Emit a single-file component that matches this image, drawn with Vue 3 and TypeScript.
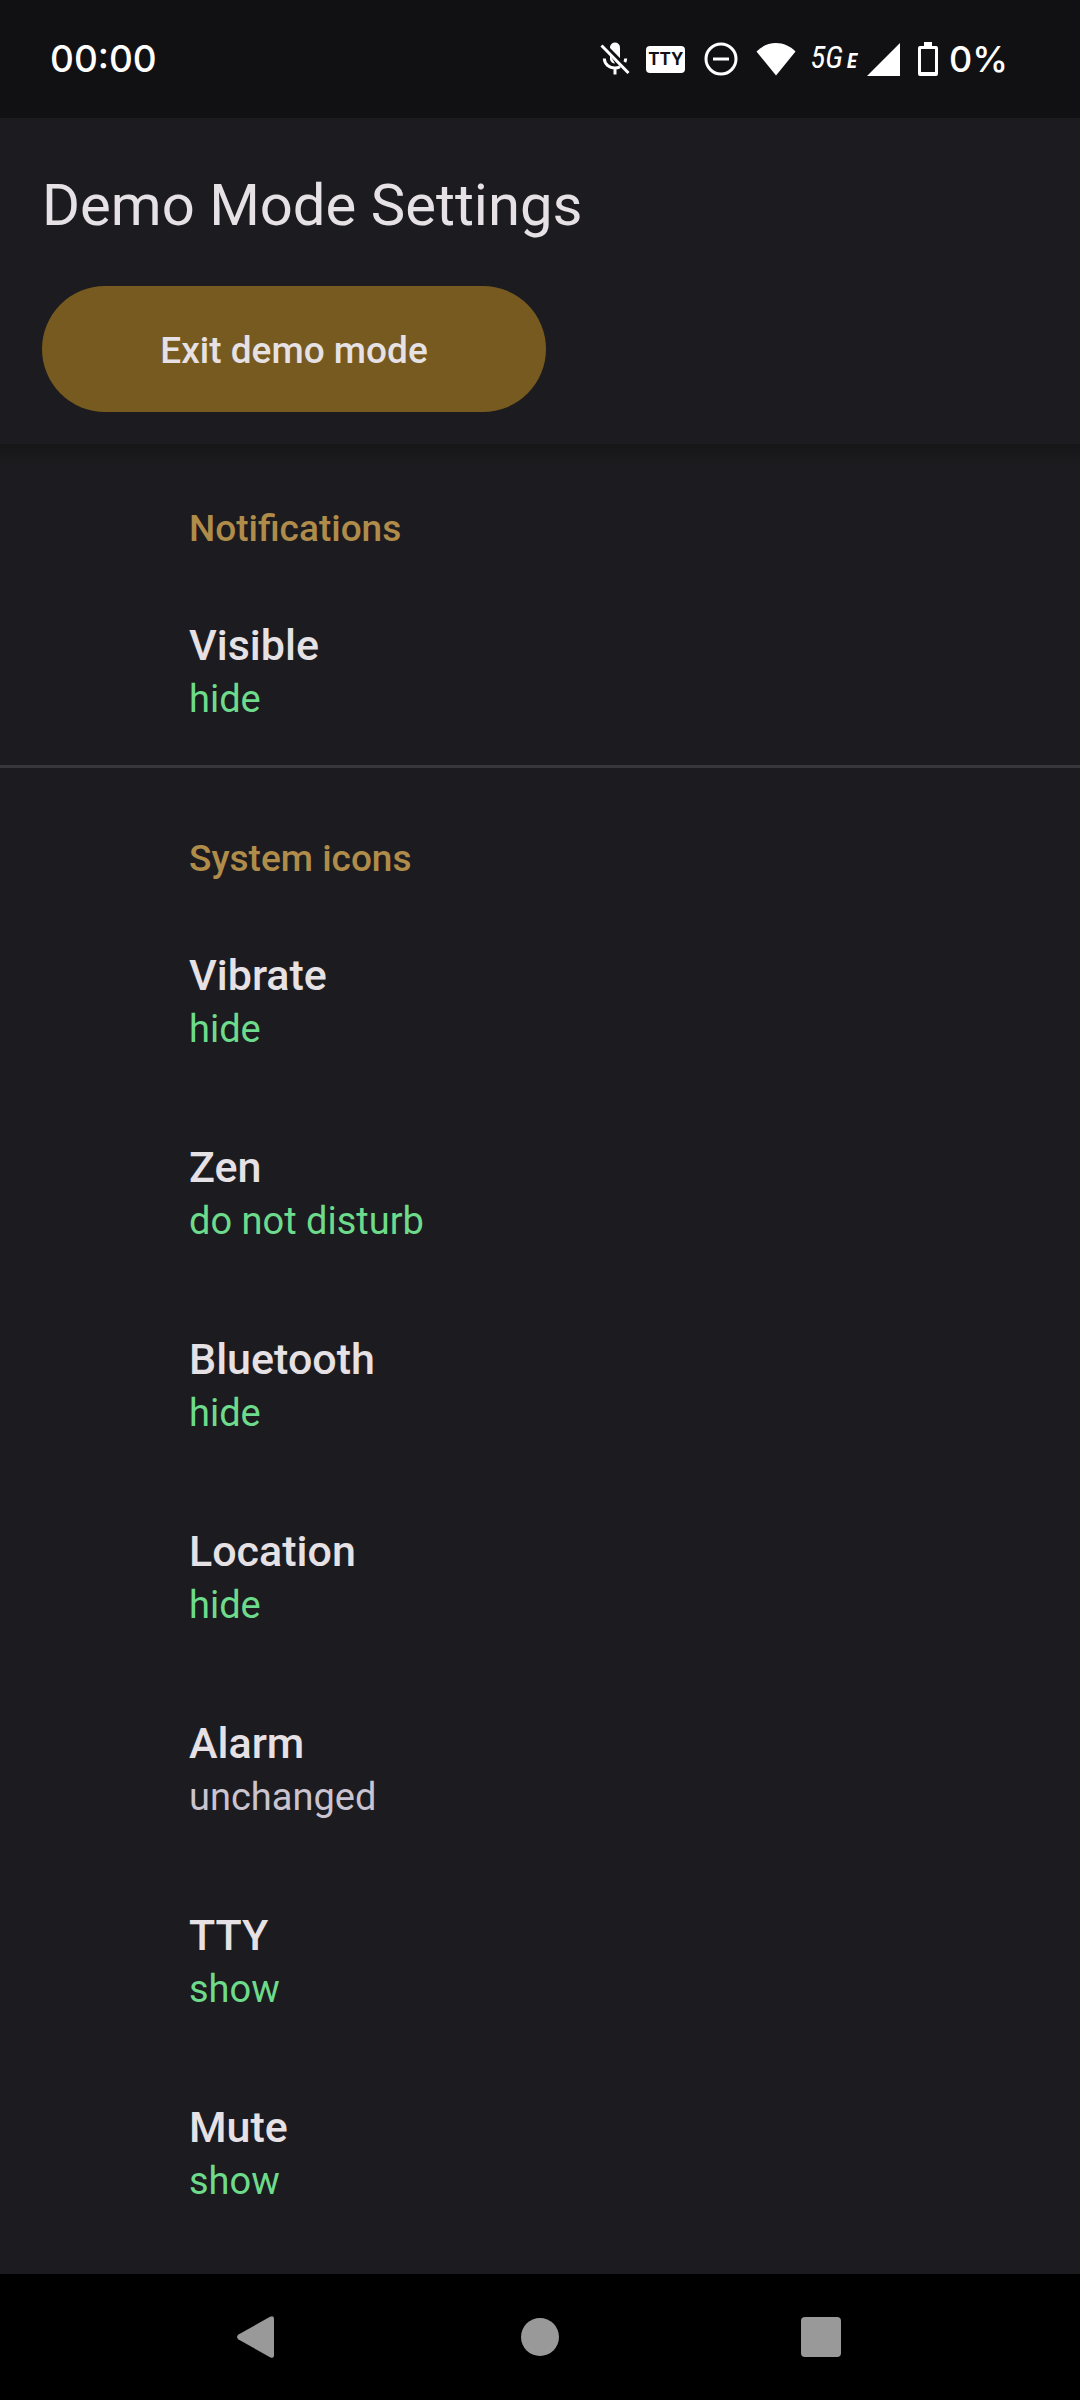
<script setup lang="ts">
interface Setting {
  title: string
  value: string
}

interface Section {
  heading: string
  settings: Setting[]
}

const sections: Section[] = [
  {
    heading: 'Notifications',
    settings: [{ title: 'Visible', value: 'hide' }],
  },
  {
    heading: 'System icons',
    settings: [
      { title: 'Vibrate', value: 'hide' },
      { title: 'Zen', value: 'do not disturb' },
      { title: 'Bluetooth', value: 'hide' },
      { title: 'Location', value: 'hide' },
      { title: 'Alarm', value: 'unchanged' },
      { title: 'TTY', value: 'show' },
      { title: 'Mute', value: 'show' },
    ],
  },
]
</script>

<template>
  <div class="screen">
    <div class="status-bar">
      <span class="clock">00:00</span>
      <div class="status-icons">
        <svg class="mic" width="30" height="34" viewBox="0 0 30 34" aria-hidden="true">
          <path d="M10 5.500a5 5 0 0 1 10 0v11c0 1-.2 1.700-.6 2.400L10 9z" fill="#fff" />
          <path d="M4.300 16.500c.2 5.500 4.800 9.500 10.700 9.500 2 0 3.600-.5 5-1.300M25.700 16.500c-.1 1.400-.4 2.500-.9 3.600M15 26v6.500" fill="none" stroke="#fff" stroke-width="3" />
          <path d="M10 13v3.500c0 2.800 2.200 5 5 5z" fill="#fff" />
          <path d="M3.500 1.500 30 28.500" stroke="#111113" stroke-width="3" />
          <path d="M1.500 3.500 28.500 31" stroke="#fff" stroke-width="3" />
        </svg>
        <span class="tty">TTY</span>
        <svg class="dnd" width="34" height="34" viewBox="0 0 34 34" aria-hidden="true">
          <circle cx="17" cy="17" r="15" fill="none" stroke="#fff" stroke-width="3" />
          <path d="M9 17h16" stroke="#fff" stroke-width="3" />
        </svg>
        <svg class="wifi" width="40" height="34" viewBox="0 0 40 34" aria-hidden="true">
          <path d="M20 33.500.5 9.500C6 4 12.500 1 20 1s14 3 19.500 8.500z" fill="#fff" />
        </svg>
        <span class="network">5G<small>E</small></span>
        <svg class="signal" width="33" height="34" viewBox="0 0 33 34" aria-hidden="true">
          <path d="M0 34 33 1v33z" fill="#fff" />
        </svg>
        <svg class="battery" width="20" height="34" viewBox="0 0 20 34" aria-hidden="true">
          <path d="M6 0h8v4h4a2 2 0 0 1 2 2v26a2 2 0 0 1-2 2H2a2 2 0 0 1-2-2V6a2 2 0 0 1 2-2h4zM3 7v23h14V7z" fill="#fff" fill-rule="evenodd" />
        </svg>
        <span class="level">0%</span>
      </div>
    </div>

    <header class="app-bar">
      <h1>Demo Mode Settings</h1>
      <button type="button" class="exit">Exit demo mode</button>
    </header>

    <main class="settings">
      <section v-for="section in sections" :key="section.heading" class="section">
        <h2>{{ section.heading }}</h2>
        <ul>
          <li v-for="setting in section.settings" :key="setting.title">
            <button type="button" class="setting">
              <span class="title">{{ setting.title }}</span>
              <span class="value" :class="{ unset: setting.value === 'unchanged' }">{{ setting.value }}</span>
            </button>
          </li>
        </ul>
      </section>
    </main>

    <nav class="nav-bar">
      <button type="button" aria-label="Back">
        <svg width="46" height="46" viewBox="0 0 46 46" aria-hidden="true">
          <path d="M2.500 20.500 34 2.800q4-2 4 2v36.400q0 4-4 2L2.500 25.500q-3-2.500 0-5z" fill="#999" />
        </svg>
      </button>
      <button type="button" aria-label="Home">
        <svg width="46" height="46" viewBox="0 0 46 46" aria-hidden="true">
          <circle cx="23" cy="23" r="19" fill="#999" />
        </svg>
      </button>
      <button type="button" aria-label="Recent apps">
        <svg width="46" height="46" viewBox="0 0 46 46" aria-hidden="true">
          <rect x="3" y="3" width="40" height="40" rx="4" fill="#999" />
        </svg>
      </button>
    </nav>
  </div>
</template>

<style>
body {
  margin: 0;
  background: #1c1b1f;
}
</style>

<style scoped>
.screen {
  display: flex;
  flex-direction: column;
  min-height: 100vh;
  background: #1c1b1f;
  color: #e6e1e5;
  font-family: Roboto, 'Liberation Sans', sans-serif;
}

button {
  margin: 0;
  padding: 0;
  border: 0;
  background: none;
  color: inherit;
  font: inherit;
}

svg {
  display: block;
  flex: none;
}

.status-bar {
  display: flex;
  align-items: center;
  justify-content: space-between;
  box-sizing: border-box;
  height: 118px;
  padding: 0 72px 0 50px;
  background: #111113;
  color: #fff;
  font-family: Inter, Roboto, sans-serif;
  font-size: 37px;
  font-weight: 500;
  line-height: 48px;
}

.status-icons {
  display: flex;
  align-items: center;
}

.mic {
  margin-right: 16px;
}

.tty {
  width: 39px;
  margin-right: 19px;
  border-radius: 4px;
  background: #fff;
  color: #111113;
  font-size: 17px;
  font-weight: 700;
  line-height: 27px;
  text-align: center;
}

.dnd {
  margin-right: 18px;
}

.wifi {
  margin-right: 14px;
}

.network {
  margin-right: 10px;
  font-family: 'Roboto Condensed', Roboto, sans-serif;
  font-size: 31px;
  font-style: italic;
  font-weight: 400;
}

.network small {
  margin-left: 4px;
  font-size: 21px;
  font-weight: 700;
}

.signal {
  margin-right: 18px;
}

.battery {
  margin-right: 11px;
}

.level {
  font-size: 36px;
}

.app-bar {
  padding: 50px 42px 32px;
}

h1 {
  margin: 0 0 44px;
  font-size: 58px;
  font-weight: 400;
  line-height: 74px;
}

.exit {
  display: block;
  width: 504px;
  max-width: 100%;
  height: 126px;
  padding-top: 2px;
  border-radius: 63px;
  background: #775a1f;
  font-size: 37px;
  font-weight: 500;
}

.settings {
  flex: 1;
  background: linear-gradient(#161617, #1c1b1f 21px);
}

.section {
  padding-top: 59px;
}

.section + .section {
  margin-top: -3px;
  padding-top: 65px;
  border-top: 3px solid #38373b;
}

h2 {
  margin: 0 0 21px;
  padding: 0 42px 0 189px;
  color: #b08c4a;
  font-size: 37px;
  font-weight: 500;
  line-height: 52px;
}

ul {
  margin: 0;
  padding: 0;
  list-style: none;
}

.setting {
  display: flex;
  flex-direction: column;
  width: 100%;
  padding: 41px 42px 43px 189px;
  text-align: left;
}

.title {
  font-size: 43px;
  font-weight: 500;
  line-height: 56px;
}

.value {
  color: #6ddb8b;
  font-size: 38px;
  line-height: 52px;
}

.value.unset {
  color: #cac4d0;
}

.nav-bar {
  display: flex;
  justify-content: center;
  height: 126px;
  background: #000;
}

.nav-bar button {
  display: flex;
  align-items: center;
  justify-content: center;
  width: 26%;
}
</style>
